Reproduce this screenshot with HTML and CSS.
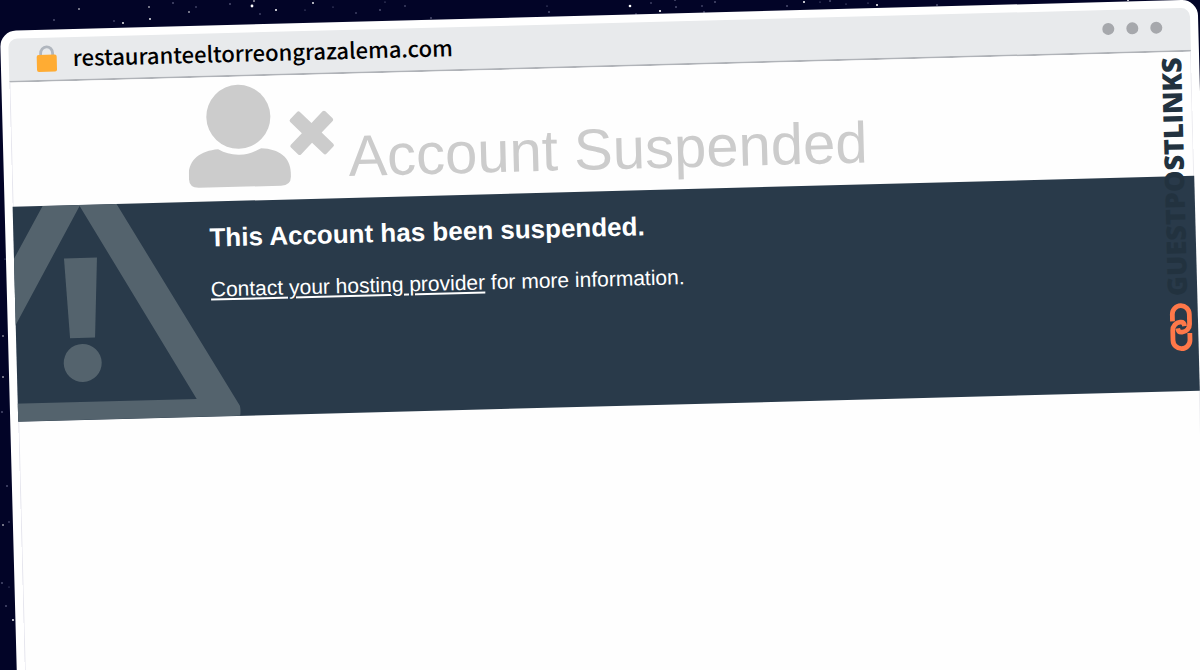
FILE: index.html
```html
<!DOCTYPE html>
<html lang="en">
<head>
  <meta charset="UTF-8" />
  <title>restauranteeltorreongrazalema.com</title>
  <link rel="stylesheet" href="styles.css">
</head>
<body>

<svg class="stars" aria-hidden="true">
  <g fill="#ffffff">
    <circle cx="252" cy="6" r="1.4"/>
    <circle cx="254" cy="1" r="0.8"/>
    <circle cx="630" cy="6" r="1.3"/>
    <circle cx="660" cy="11" r="1.1"/>
    <circle cx="804" cy="2" r="1"/>
    <circle cx="877" cy="5" r="1"/>
    <circle cx="276" cy="10" r="1"/>
    <circle cx="150" cy="19" r="0.9"/>
    <circle cx="123" cy="23" r="0.9"/>
    <circle cx="313" cy="3" r="0.9"/>
    <circle cx="79" cy="9" r="0.8"/>
    <circle cx="149" cy="7" r="0.8"/>
    <circle cx="189" cy="12" r="0.8"/>
    <circle cx="1128" cy="0" r="1"/>
    <circle cx="3" cy="377" r="0.8"/>
    <circle cx="3" cy="525" r="0.8"/>
    <circle cx="13" cy="620" r="0.9"/>
    <circle cx="3" cy="336" r="0.7"/>
  </g>
  <g fill="#7d80a3">
    <circle cx="54" cy="20" r="0.8"/>
    <circle cx="114" cy="21" r="0.7"/>
    <circle cx="173" cy="3" r="0.8"/>
    <circle cx="196" cy="7" r="0.7"/>
    <circle cx="230" cy="4" r="0.8"/>
    <circle cx="260" cy="14" r="0.7"/>
    <circle cx="305" cy="10" r="0.6"/>
    <circle cx="333" cy="7" r="0.6"/>
    <circle cx="356" cy="13" r="0.7"/>
    <circle cx="380" cy="10" r="0.8"/>
    <circle cx="385" cy="2" r="0.6"/>
    <circle cx="405" cy="6" r="0.7"/>
    <circle cx="431" cy="18" r="0.8"/>
    <circle cx="549" cy="12" r="0.8"/>
    <circle cx="547" cy="6" r="0.6"/>
    <circle cx="636" cy="14" r="0.7"/>
    <circle cx="651" cy="3" r="0.7"/>
    <circle cx="675" cy="0" r="0.8"/>
    <circle cx="676" cy="7" r="0.8"/>
    <circle cx="702" cy="6" r="0.7"/>
    <circle cx="704" cy="12" r="0.8"/>
    <circle cx="715" cy="2" r="0.8"/>
    <circle cx="787" cy="6" r="0.8"/>
    <circle cx="820" cy="2" r="0.6"/>
    <circle cx="830" cy="1" r="0.8"/>
    <circle cx="846" cy="4" r="0.6"/>
    <circle cx="868" cy="3" r="0.6"/>
    <circle cx="937" cy="5" r="0.8"/>
    <circle cx="2" cy="412" r="0.8"/>
    <circle cx="7" cy="486" r="0.8"/>
    <circle cx="9" cy="522" r="0.7"/>
    <circle cx="2" cy="583" r="0.8"/>
    <circle cx="9" cy="587" r="0.5"/>
    <circle cx="6" cy="606" r="0.8"/>
    <circle cx="5" cy="259" r="0.6"/>
  </g>
</svg>

<div class="browser">
  <header class="bar">
    <svg class="lock" viewBox="0 0 22 28" aria-hidden="true">
      <path d="M5 12V8.500a6 6.500 0 0 1 12 0V12" fill="none" stroke="#b0b6be" stroke-width="2.800"/>
      <rect x="1" y="10" width="20" height="17" rx="2" fill="#ffac33"/>
    </svg>
    <span class="url">restauranteeltorreongrazalema.com</span>
    <div class="dots"><i></i><i></i><i></i></div>
  </header>

  <main class="page">
    <div class="title">
      <svg class="user" viewBox="0 0 146 104" aria-hidden="true">
        <g fill="#cccccc">
          <circle cx="51" cy="33" r="32"/>
          <path d="M30 65C37 69 43 71 51 71S65 69 73 65C91 66 102 75 102 90V94Q102 103 92 103H10Q0 103 0 94V90C0 75 12 66 30 65Z"/>
          <path transform="translate(124 51) rotate(45)" d="M-7 -23q0 -2 2 -2H5q2 0 2 2V-7H23q2 0 2 2V5q0 2 -2 2H7V23q0 2 -2 2H-5q-2 0 -2 -2V7H-23q-2 0 -2 -2V-5q0 -2 2 -2H-7Z"/>
        </g>
      </svg>
      <h1>Account Suspended</h1>
    </div>

    <section class="notice">
      <svg class="warning" viewBox="0 0 224 215" aria-hidden="true">
        <g fill="#54636d">
          <path fill-rule="evenodd" d="M30 0H104L222 205Q223 210 222 215H-88V205ZM67 1L-45 197H179Z"/>
          <path d="M50 53H83L79 133H54Z"/>
          <circle cx="66" cy="158" r="19"/>
        </g>
      </svg>
      <div class="message">
        <h2>This Account has been suspended.</h2>
        <p><a href="#">Contact your hosting provider</a> for more information.</p>
      </div>
    </section>
  </main>

  <div class="brand">
    <span class="brand-name">GUESTPOSTLINKS</span>
    <svg class="chain" viewBox="0 0 24 50" aria-hidden="true">
      <g fill="none" stroke="#ff7849" stroke-width="4.800">
        <path d="M3.500 19V12A8.500 8.500 0 0 1 20.500 12V22A8 8 0 0 1 13 30H12Q9 30 8.500 26"/>
        <path d="M20.500 31V38A8.500 8.500 0 0 1 3.500 38V28A8 8 0 0 1 11 20H12Q15 20 15.500 24"/>
      </g>
    </svg>
  </div>
</div>

</body>
</html>
```
FILE: styles.css
```css
* {
  box-sizing: border-box;
}
body {
  margin: 0;
  height: 100vh;
  overflow: hidden;
  background: #020427;
  font-family: "Liberation Sans", Arial, sans-serif;
}
.stars {
  position: absolute;
  top: 0;
  left: 0;
  width: 100%;
  height: 100%;
}

/* tilted window */
.browser {
  position: relative;
  display: flex;
  flex-direction: column;
  min-height: 110vh;
  margin: 31px 2px 0 0;
  padding: 8px;
  border-radius: 16px;
  background: #fff;
  transform: rotate(-1.5deg);
  transform-origin: 0 0;
}
.bar {
  display: flex;
  align-items: center;
  gap: 15px;
  height: 44px;
  padding: 0 28px 0 27px;
  border-bottom: 2px solid #b0b3b8;
  border-radius: 9px 9px 0 0;
  background: #e8eaec;
}
.lock {
  width: 22px;
  height: 28px;
}
.url,
.dots {
  padding-bottom: 5px;
}
.url {
  flex: 1;
  color: #000;
  font-family: "Noto Sans CJK SC", "Noto Sans", sans-serif;
  font-size: 22px;
  font-weight: 500;
  line-height: 32px;
}
.dots {
  display: flex;
  gap: 12px;
}
.dots i {
  width: 12px;
  height: 12px;
  border-radius: 50%;
  background: #a6a8ac;
}

.page {
  flex: 1;
  background: #fefefe;
  box-shadow: inset 1px 0 #e6e6ee, inset -1px 0 #ececf0;
}
.title {
  display: flex;
  align-items: flex-end;
  gap: 14px;
  height: 124px;
  padding: 0 0 13px 177px;
}
.user {
  width: 146px;
  height: 104px;
}
h1 {
  margin: 0;
  color: #ccc;
  font-size: 58px;
  font-weight: normal;
  line-height: 58px;
}
.notice {
  display: flex;
  min-height: 215px;
  background: #293a4a;
  color: #fff;
}
.warning {
  flex: none;
  width: 224px;
  height: 215px;
  margin-right: -28px;
}
.message {
  padding-top: 20px;
}
h2 {
  margin: 0;
  font-size: 26px;
  line-height: 32px;
}
p {
  margin: 24px 0 0;
  font-size: 21px;
  line-height: 24px;
}
a {
  color: inherit;
}

/* logo over the right edge of the page */
.brand {
  position: absolute;
  top: 57px;
  right: 13px;
  display: flex;
  flex-direction: column;
  align-items: flex-end;
  gap: 6px;
}
.brand-name {
  color: #22323f;
  font-family: "Open Sans", "Noto Sans", sans-serif;
  font-size: 27px;
  font-weight: 800;
  line-height: 30px;
  writing-mode: vertical-rl;
  transform: rotate(180deg);
}
.chain {
  width: 24px;
  height: 50px;
}
```
